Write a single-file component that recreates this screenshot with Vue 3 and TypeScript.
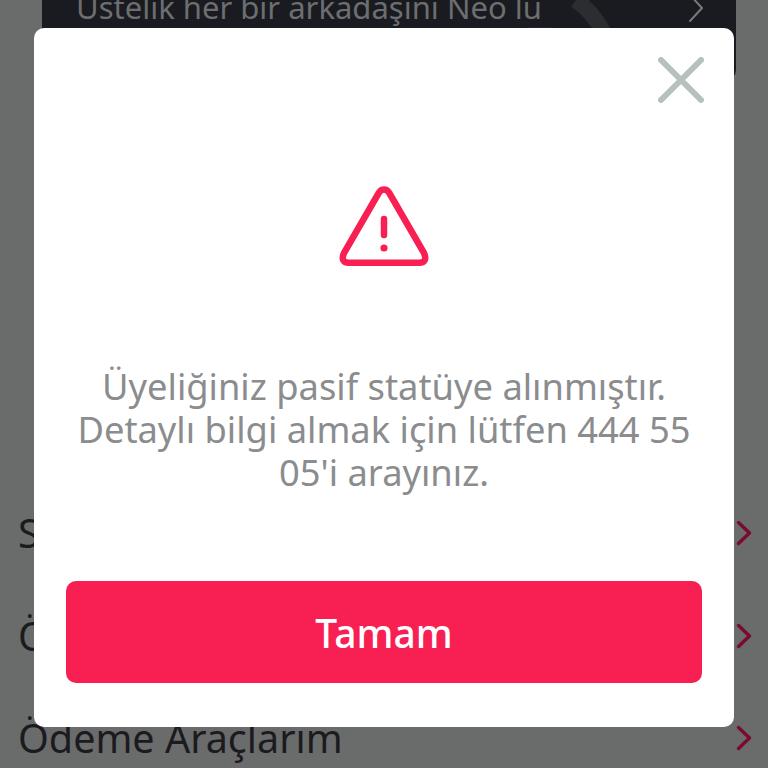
<template>
  <div class="screen">
    <div class="page">
      <div class="banner">
        <span class="banner-text">Üstelik her bir arkadaşını Neo lu</span>
        <svg class="banner-art" width="170" height="80" viewBox="0 0 170 80" fill="none">
          <path d="M18 80 C26 62 34 50 42 40" stroke="#3a3b3f" stroke-width="12" />
          <path d="M120 0 C142 16 156 40 160 80" stroke="#2c2d31" stroke-width="16" />
          <path d="M62 80 V44 Q62 30 76 30 H92 Q106 30 106 44 V80" stroke="#303135" stroke-width="5" />
        </svg>
        <svg class="banner-chevron" width="16" height="30" viewBox="0 0 16 30" fill="none">
          <path d="M2 2 L14 15 L2 28" stroke="#77797b" stroke-width="2" stroke-linecap="round" stroke-linejoin="round" />
        </svg>
      </div>
      <ul class="menu">
        <li v-for="item in menuItems" :key="item" class="menu-row">
          <span>{{ item }}</span>
          <svg width="16" height="26" viewBox="0 0 16 26" fill="none">
            <path d="M2.5 2.5 L13.5 13 L2.5 23.5" stroke="#7b0a30" stroke-width="3.4" stroke-linecap="round" stroke-linejoin="round" />
          </svg>
        </li>
      </ul>
    </div>

    <div class="overlay">
      <div class="modal">
        <button class="close" aria-label="Kapat">
          <svg width="46" height="46" viewBox="0 0 46 46" fill="none">
            <path d="M3 3 L43 43 M43 3 L3 43" stroke="#b6c0bf" stroke-width="6" stroke-linecap="round" />
          </svg>
        </button>
        <svg class="warning" width="90" height="80" viewBox="0 0 90 80" fill="none">
          <path d="M45 3.500 Q48 3.500 50 6.500 L85 67 Q89 76.500 80 76.750 H10 Q1 76.500 5 67 L40 6.500 Q42 3.500 45 3.500 Z" stroke="#f81f53" stroke-width="6.500" stroke-linejoin="round" />
          <path d="M45 33 V49" stroke="#f81f53" stroke-width="6.500" stroke-linecap="round" />
          <circle cx="45" cy="62" r="3.600" fill="#f81f53" />
        </svg>
        <p class="message">Üyeliğiniz pasif statüye alınmıştır. Detaylı bilgi almak için lütfen 444 55 05'i arayınız.</p>
        <button class="ok">Tamam</button>
      </div>
    </div>
  </div>
</template>

<script setup lang="ts">
const menuItems: string[] = ['Sipariş Geçmişim', 'Ödeme Geçmişim', 'Ödeme Araçlarım']
</script>

<style>
html, body {
  margin: 0;
  background: #6b6b6b;
}
</style>

<style scoped>
.screen {
  position: relative;
  width: 768px;
  height: 768px;
  overflow: hidden;
  font-family: "Noto Sans", "Open Sans", sans-serif;
  background: #6a6b6b;
}

.page {
  display: flex;
  flex-direction: column;
  margin-top: -60px;
}

.banner {
  position: relative;
  height: 140px;
  margin: 0 32px 0 42px;
  padding: 0 32px 0 34px;
  display: flex;
  align-items: center;
  justify-content: space-between;
  border-radius: 10px;
  background: #1a1b20;
  overflow: hidden;
}

.banner-text {
  font-size: 31px;
  color: #6c6e70;
  margin-top: -7px;
}

.banner-art {
  position: absolute;
  right: 110px;
  bottom: 0;
}

.banner-chevron {
  position: relative;
  margin-top: -4px;
}

.menu {
  list-style: none;
  margin: 402px 0 0;
  padding: 0 16px 0 18px;
}

.menu-row {
  height: 102.500px;
  display: flex;
  align-items: center;
  justify-content: space-between;
  font-size: 39.500px;
  color: #1b1b1f;
}

.overlay {
  position: absolute;
  inset: 0;
  padding: 28px 34px 41px;
  display: flex;
}

.modal {
  position: relative;
  flex: 1;
  padding: 158px 32px 44px;
  display: flex;
  flex-direction: column;
  align-items: center;
  background: #fff;
  border-radius: 10px;
}

.close {
  position: absolute;
  top: 29px;
  right: 30px;
  padding: 0;
  border: 0;
  background: none;
  line-height: 0;
}

.message {
  margin: 99px 0 0;
  font-size: 36.300px;
  line-height: 43px;
  text-align: center;
  color: #8a8c8e;
}

.ok {
  width: 100%;
  height: 102px;
  margin-top: auto;
  border: 0;
  border-radius: 10px;
  background: #f81f53;
  color: #fff;
  font-family: inherit;
  font-size: 39px;
  font-weight: 500;
}
</style>
